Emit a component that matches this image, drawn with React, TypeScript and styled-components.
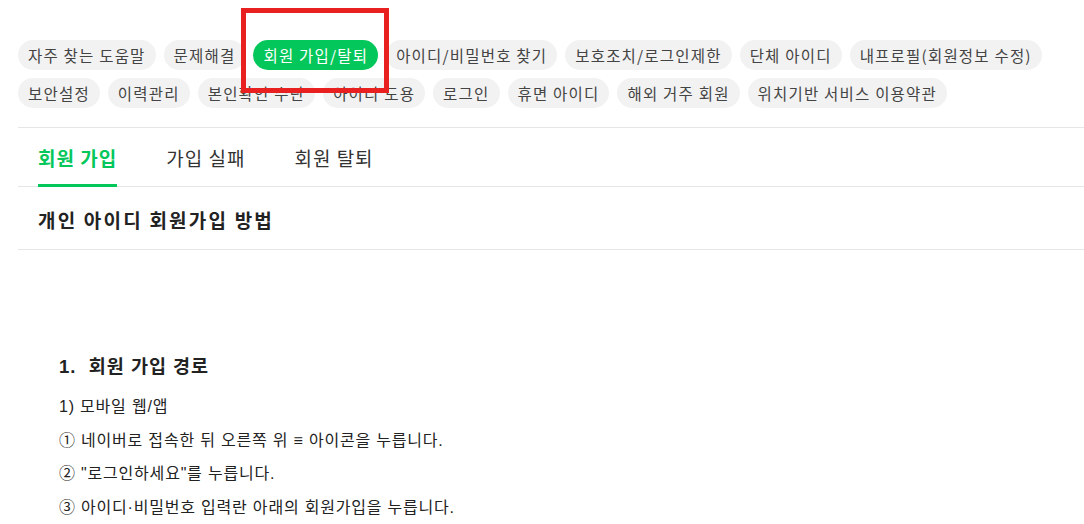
import React from "react";
import styled, { createGlobalStyle } from "styled-components";

const Global = createGlobalStyle`
  html, body { margin: 0; padding: 0; background: #fff; }
  body { font-family: "Noto Sans CJK KR", "Noto Sans", sans-serif; color: #222; }
  * { box-sizing: border-box; }
`;

const Page = styled.div`
  position: relative;
  width: 1084px;
  height: 524px;
  overflow: hidden;
  padding: 40px 0 0 18px;
`;

const ChipArea = styled.div`
  display: flex;
  flex-direction: column;
  gap: 8px;
`;

const ChipRow = styled.div`
  display: flex;
  gap: 8px;
  white-space: nowrap;
`;

const Chip = styled.button<{ $active?: boolean }>`
  height: 30px;
  padding: 0 10px;
  border: none;
  border-radius: 15px;
  background: ${(p) => (p.$active ? "#03c75a" : "#f2f2f2")};
  color: ${(p) => (p.$active ? "#fff" : "#444")};
  font-family: "Noto Sans CJK KR", sans-serif;
  font-size: 15.5px;
  letter-spacing: 1.2px;
  line-height: 30px;
  display: flex;
  align-items: center;
`;

const Tabs = styled.div`
  margin-top: 19px;
  margin-right: -20px;
  border-top: 1px solid #e6e6e6;
  border-bottom: 1px solid #e6e6e6;
  height: 60px;
  display: flex;
  padding-left: 20px;
  gap: 50px;
`;

const Tab = styled.div<{ $active?: boolean }>`
  height: 59px;
  margin-bottom: -1px;
  display: flex;
  align-items: center;
  font-size: 19px;
  letter-spacing: 1px;
  font-weight: ${(p) => (p.$active ? 700 : 400)};
  color: ${(p) => (p.$active ? "#03c75a" : "#333")};
  border-bottom: 3px solid ${(p) => (p.$active ? "#03c75a" : "transparent")};
  padding-top: 2px;
  margin-right: -1px;
`;

const Title = styled.h2`
  margin: 0 -20px 0 0;
  height: 63px;
  padding: 0 20px;
  display: flex;
  align-items: center;
  padding-top: 2px;
  font-size: 19px;
  letter-spacing: 2.2px;
  font-weight: 700;
  color: #222;
  border-bottom: 1px solid #e6e6e6;
`;

const Body = styled.div`
  padding: 102px 0 0 41px;
  font-family: "Liberation Sans", "Noto Sans CJK KR", sans-serif;
`;

const SectionHead = styled.h3`
  margin: 0 0 8px;
  font-size: 18.5px;
  letter-spacing: 1px;
  font-weight: 700;
  line-height: 30px;
  color: #222;
  white-space: pre;
`;

const Line = styled.p`
  margin: 0;
  font-size: 16px;
  letter-spacing: 0.8px;
  line-height: 33.5px;
  color: #222;
`;

const Highlight = styled.div`
  position: absolute;
  left: 241px;
  top: 8px;
  width: 148px;
  height: 85px;
  border: 5px solid #e8201f;
  pointer-events: none;
`;

const row1 = ["자주 찾는 도움말", "문제해결", "회원 가입/탈퇴", "아이디/비밀번호 찾기", "보호조치/로그인제한", "단체 아이디", "내프로필(회원정보 수정)"];
const row2 = ["보안설정", "이력관리", "본인확인 수단", "아이디 도용", "로그인", "휴면 아이디", "해외 거주 회원", "위치기반 서비스 이용약관"];

export default function App() {
  return (
    <>
      <Global />
      <Page>
        <ChipArea>
          <ChipRow>
            {row1.map((c) => (
              <Chip key={c} $active={c === "회원 가입/탈퇴"}>{c}</Chip>
            ))}
          </ChipRow>
          <ChipRow>
            {row2.map((c) => (
              <Chip key={c}>{c}</Chip>
            ))}
          </ChipRow>
        </ChipArea>
        <Tabs>
          <Tab $active>회원 가입</Tab>
          <Tab>가입 실패</Tab>
          <Tab>회원 탈퇴</Tab>
        </Tabs>
        <Title>개인 아이디 회원가입 방법</Title>
        <Body>
          <SectionHead>{"1.  회원 가입 경로"}</SectionHead>
          <Line>1) 모바일 웹/앱</Line>
          <Line>① 네이버로 접속한 뒤 오른쪽 위 ≡ 아이콘을 누릅니다.</Line>
          <Line>② "로그인하세요"를 누릅니다.</Line>
          <Line>③ 아이디·비밀번호 입력란 아래의 회원가입을 누릅니다.</Line>
        </Body>
        <Highlight />
      </Page>
    </>
  );
}
